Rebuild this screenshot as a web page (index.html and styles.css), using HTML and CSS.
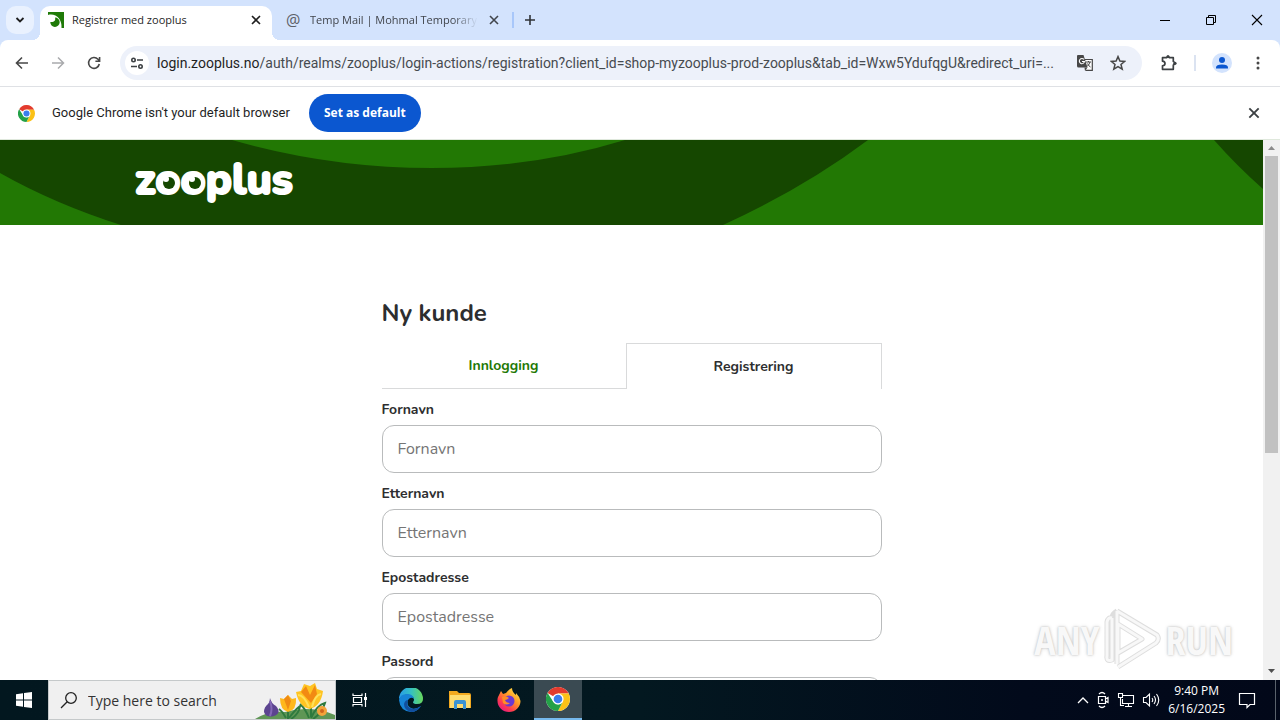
FILE: index.html
```html
<!DOCTYPE html>
<html lang="no">
<head>
<meta charset="utf-8">
<title>Registrer med zooplus</title>
<link rel="stylesheet" href="styles.css">
</head>
<body>
<svg class="defs" aria-hidden="true">
  <symbol id="x" viewBox="0 0 12 12"><path d="M2 2l8 8M10 2l-8 8" fill="none" stroke="currentColor" stroke-width="1.6"/></symbol>
  <symbol id="chrome" viewBox="0 0 24 24">
    <circle cx="12" cy="12" r="12" fill="#fff"/>
    <path d="M12 12L1.6 6A12 12 0 0 1 22.4 6L22.4 6.6H12z" fill="#e33b2e"/>
    <path d="M12 6.6H22.7A12 12 0 0 1 12 24L16.7 14.7z" fill="#fbc116"/>
    <path d="M1.6 6L7.3 14.7L12 17.4L16.2 15.7L12 24A12 12 0 0 1 1.6 6z" fill="#24a148"/>
    <circle cx="12" cy="12" r="5.6" fill="#fff"/><circle cx="12" cy="12" r="4.3" fill="#3b7ded"/>
  </symbol>
</svg>

<header class="tabstrip">
  <button class="tab-search" aria-label="Search tabs"><svg width="10" height="10" viewBox="0 0 10 10"><path d="M1.5 3L5 6.5L8.500 3" fill="none" stroke="#1f1f1f" stroke-width="1.800"/></svg></button>
  <div class="tab tab-active">
    <svg width="16" height="16" viewBox="0 0 16 16"><path d="M0 0H16V16H0z" fill="#1f7a08"/><path d="M0 3C8 1 14 7 13.500 16H0z" fill="#fff"/><path d="M7 5.500A4.700 4.700 0 1 1 2.300 10C6 10.500 8 8.500 7 5.500z" fill="#1f7a08"/></svg>
    <span class="tab-title">Registrer med zooplus</span>
    <button class="tab-close" aria-label="Close tab"><svg width="12" height="12"><use href="#x"/></svg></button>
  </div>
  <div class="tab tab-idle">
    <span class="at" aria-hidden="true">@</span>
    <span class="tab-title fade">Temp Mail | Mohmal Temporary</span>
    <button class="tab-close" aria-label="Close tab"><svg width="12" height="12"><use href="#x"/></svg></button>
  </div>
  <i class="tab-sep"></i>
  <button class="new-tab" aria-label="New tab"><svg width="12" height="12" viewBox="0 0 12 12"><path d="M6 1V11M1 6H11" stroke="#303337" stroke-width="1.600"/></svg></button>
  <div class="win-controls">
    <button aria-label="Minimize"><svg width="12" height="12" viewBox="0 0 12 12"><path d="M1 6.500H11" stroke="#000"/></svg></button>
    <button aria-label="Restore"><svg width="12" height="12" viewBox="0 0 12 12"><path d="M1.500 3.500H8.500V10.500H1.500zM3.500 3.500V1.500H10.500V8.500H8.500" fill="none" stroke="#000"/></svg></button>
    <button aria-label="Close"><svg width="12" height="12" viewBox="0 0 12 12"><path d="M1 1L11 11M11 1L1 11" stroke="#000" stroke-width="1.100"/></svg></button>
  </div>
</header>

<nav class="toolbar">
  <button class="nav-btn" aria-label="Back"><svg width="14" height="14" viewBox="0 0 14 14"><path d="M13 7H2M7 1.500L1.500 7L7 12.500" fill="none" stroke="#474747" stroke-width="1.600"/></svg></button>
  <button class="nav-btn" aria-label="Forward"><svg width="14" height="14" viewBox="0 0 14 14"><path d="M1 7H12M7 1.500L12.500 7L7 12.500" fill="none" stroke="#a9aaad" stroke-width="1.500"/></svg></button>
  <button class="nav-btn" aria-label="Reload"><svg width="14" height="14" viewBox="0 0 14 14"><path d="M12.300 8A5.400 5.400 0 1 1 11 3.300L12.500 5M12.600 1V5.200H8.400" fill="none" stroke="#474747" stroke-width="1.600"/></svg></button>
  <div class="omnibox">
    <button class="site-info" aria-label="View site information"><svg width="14" height="14" viewBox="0 0 14 14"><g fill="none" stroke="#3c4043" stroke-width="1.600"><circle cx="3.500" cy="4" r="1.700"/><path d="M7 4H13M1 10.500H7"/><circle cx="10.500" cy="10.500" r="1.700"/></g></svg></button>
    <div class="url"><span class="host">login.zooplus.no</span>/auth/realms/zooplus/login-actions/registration?client_id=shop-myzooplus-prod-zooplus&amp;tab_id=Wxw5YdufqgU&amp;redirect_uri=...</div>
    <button aria-label="Translate"><svg width="18" height="18" viewBox="0 0 18 18"><path d="M7 5.500H16.300V16.300H9.500" fill="#fff" stroke="#474747" stroke-width="1.200"/><path d="M1.500 1H7.500L11.500 13.500H2.500Q1 13.500 1 12V2z" fill="#474747"/><path d="M8.500 13.500H11.500L9 17z" fill="#474747"/><path d="M8 5.500A2.600 2.600 0 1 0 8.500 7.500H6" fill="none" stroke="#fff" stroke-width="1.100"/><path d="M10 8H15M12.500 7V8M14 8Q13 11 11 12.500M11.500 9.500Q12.500 12 14.500 13" fill="none" stroke="#474747"/></svg></button>
    <button aria-label="Bookmark"><svg width="16" height="16" viewBox="0 0 16 16"><path d="M8 1.600L9.900 6L14.700 6.400L11 9.500L12.200 14.200L8 11.700L3.800 14.200L5 9.500L1.300 6.400L6.100 6z" fill="none" stroke="#474747" stroke-width="1.500"/></svg></button>
  </div>
  <button class="ext" aria-label="Extensions"><svg width="18" height="18" viewBox="0 0 18 18"><path d="M2.500 3.700H6.500A1.800 1.800 0 0 1 9.500 3.700H13.300V7.500A1.800 1.800 0 0 1 13.300 11V15.300H2.500V11.800Q5 11.500 5 9.500Q5 7.500 2.500 7.200z" fill="none" stroke="#3c4043" stroke-width="1.700" stroke-linejoin="round"/><circle cx="8" cy="2.500" r="1.500" fill="#3c4043"/><circle cx="15" cy="9.300" r="1.600" fill="#3c4043"/></svg></button>
  <i class="tool-sep"></i>
  <button class="profile" aria-label="Profile"><svg width="20" height="20" viewBox="0 0 20 20"><circle cx="10" cy="10" r="10" fill="#d3e3fd"/><circle cx="10" cy="7" r="3" fill="#0b57d0"/><path d="M4 15.500V14.500Q4 11.500 10 11.500T16 14.500V15.500z" fill="#0b57d0"/></svg></button>
  <button class="menu" aria-label="Menu"><svg width="4" height="16" viewBox="0 0 4 16"><g fill="#474747"><circle cx="2" cy="3" r="1.500"/><circle cx="2" cy="8" r="1.500"/><circle cx="2" cy="13" r="1.500"/></g></svg></button>
</nav>

<section class="infobar">
  <svg width="17" height="17"><use href="#chrome"/></svg>
  <span class="info-text">Google Chrome isn't your default browser</span>
  <button class="set-default">Set as default</button>
  <button class="info-close" aria-label="Dismiss"><svg width="14" height="14"><use href="#x"/></svg></button>
</section>

<div class="viewport">
  <main class="page">
    <div class="banner">
      <svg class="banner-art" viewBox="0 0 1263 85" preserveAspectRatio="none"><path d="M0 0H1263V85H0z" fill="#154700"/><path d="M232 0Q330 28 432 28T625 0z" fill="#227804"/><path d="M0 33Q55 64 121 85H0z" fill="#227804"/><path d="M868 0Q804 48 723 85H1263V49Q1237 26 1214 0z" fill="#227804"/></svg>
      <a class="logo" href="#"><svg width="180" height="70" viewBox="0 0 180 70" role="img" aria-label="zooplus"><text x="1" y="46" class="logo-text">zooplus</text><g fill="#154700"><circle cx="35" cy="35" r="6"/><circle cx="61" cy="35" r="6"/></g><g fill="#fff"><circle cx="32" cy="31" r="3"/><circle cx="58" cy="31" r="3"/></g></svg></a>
    </div>
    <form class="form">
      <h1>Ny kunde</h1>
      <div class="form-tabs">
        <a class="form-tab login" href="#">Innlogging</a>
        <a class="form-tab register" href="#">Registrering</a>
      </div>
      <label for="first">Fornavn</label>
      <input id="first" type="text" placeholder="Fornavn">
      <label for="last">Etternavn</label>
      <input id="last" type="text" placeholder="Etternavn">
      <label for="mail">Epostadresse</label>
      <input id="mail" type="email" placeholder="Epostadresse">
      <label for="pass">Passord</label>
      <input id="pass" type="password">
    </form>
  </main>
  <div class="scrollbar">
    <svg width="17" height="16" viewBox="0 0 17 16"><path d="M5 10L8.500 6L12 10z" fill="#8b8b8b"/></svg>
    <i class="thumb"></i>
    <svg width="17" height="17" viewBox="0 0 17 17"><path d="M5 6L8.500 10L12 6z" fill="#505050"/></svg>
  </div>
  <div class="watermark" aria-hidden="true">
    <span>ANY</span>
    <svg width="58" height="64" viewBox="0 0 58 64"><g fill="none" stroke-linejoin="round"><path d="M14 3L54 27Q57 31 53 35L15 59M15 16V45L39 31L15 16M14 3V56M14 3Q9 6 9 10V52Q3 54 4 48V14Q5 9 9 10" stroke="#dedede" stroke-width="5"/><path d="M14 3L54 27Q57 31 53 35L15 59M15 16V45L39 31L15 16M14 3V56M9 10V52Q3 54 4 48V14Q5 9 9 10" stroke="#f8f8f8" stroke-width="3"/></g></svg>
    <span>RUN</span>
  </div>
</div>

<footer class="taskbar">
  <button class="start" aria-label="Start"><svg width="16" height="16" viewBox="0 0 16 16"><path d="M0 2.300L7 1.300V7.500H0zM8 1.100L16 0V7.500H8zM0 8.500H7V14.700L0 13.700zM8 8.500H16V16L8 14.900z" fill="#fff"/></svg></button>
  <div class="search">
    <svg width="18" height="18" viewBox="0 0 18 18"><circle cx="11" cy="7" r="5.300" fill="none" stroke="#222" stroke-width="1.300"/><path d="M7.200 10.800L1 17" stroke="#222" stroke-width="1.300"/></svg>
    <input type="text" placeholder="Type here to search" aria-label="Type here to search">
    <svg class="flowers" width="80" height="38" viewBox="0 0 80 38"><path d="M0 38Q14 29 30 31Q55 24 80 34V38z" fill="#5f9655"/><path d="M33 38V24M56 36V20M56 37Q62 24 70 22Q67 32 58 38M54 37Q50 27 45 23M34 37Q40 29 45 25Q44 33 36 38M31 37Q27 30 24 28" fill="none" stroke="#2f7a3e" stroke-width="2"/><path d="M15 17Q16 22 21 25Q27 32 19 35Q11 37 9 31Q9 26 13 23Q15 21 15 17z" fill="#5c4490"/><path d="M15 20Q18 28 15 35" fill="none" stroke="#8368b6" stroke-width="2"/><path d="M25 17L29 18L33 14L37 18L41 17Q42 29 33 31Q25 29 25 17z" fill="#ffb81c"/><path d="M29 18L33 14L36 20L33 29z" fill="#f08b13"/><path d="M41 11L46 10L49 3L55 5L60 2L62 8L68 10Q66 25 55 28Q44 26 41 11z" fill="#ffc422"/><path d="M46 11L51 5L55 14L60 4L62 13L56 22z" fill="#f28a13"/><path d="M43 14Q49 14 54 26M66 13Q60 14 57 26" fill="none" stroke="#ffe05a" stroke-width="2"/><circle cx="67" cy="30" r="5" fill="#f3a33a"/><circle cx="67" cy="30" r="2" fill="#cf651b"/></svg>
  </div>
  <div class="apps">
    <button class="app" aria-label="Task View"><svg width="18" height="18" viewBox="0 0 18 18"><path d="M2 2.500V4.500H11V2.500M2 15.500V13.500H11V15.500M2.500 6.500H10.500V11.500H2.500zM14.500 2V16" fill="none" stroke="#fff" stroke-width="1.200"/><path d="M13 6H16V9H13z" fill="#fff"/></svg></button>
    <button class="app" aria-label="Edge"><svg width="24" height="24" viewBox="0 0 24 24"><defs><linearGradient id="e1"><stop offset="0" stop-color="#279be8"/><stop offset=".5" stop-color="#35c1c2"/><stop offset="1" stop-color="#68d85c"/></linearGradient></defs><path d="M0 11A12 12 0 0 1 24 11Q24 16 18 16Q14 16 14 14Q16 12 14 9Q8 3 0 11z" fill="url(#e1)"/><path d="M0 12Q1 6 8 6Q14 6 15 11Q12 8 9 12Q7 17 12 20Q16 22 22 18Q18 24 12 24Q1 23 0 12z" fill="#1784d6"/><path d="M9 12Q6 18 12 20.500Q17 22 22 18Q18 24 12 24Q5 22 5 16Q6 12 9 12z" fill="#124e9d"/></svg></button>
    <button class="app" aria-label="File Explorer"><svg width="22" height="20" viewBox="0 0 22 20"><path d="M0 1H8L10 3H20Q22 3 22 5V18H0z" fill="#f3a91f"/><path d="M1 5H21V18H1z" fill="#ffdc70"/><path d="M5 19V12Q5 10 7 10H15Q17 10 17 12V19H14V14H8V19z" fill="#3c94d4"/></svg></button>
    <button class="app" aria-label="Firefox"><svg width="24" height="24" viewBox="0 0 24 24"><defs><linearGradient id="f1" x1="1" y1="0" x2="0.200" y2="1"><stop offset="0" stop-color="#fff44f"/><stop offset=".45" stop-color="#ff9a26"/><stop offset=".75" stop-color="#ff3d4c"/><stop offset="1" stop-color="#e31587"/></linearGradient></defs><path d="M1 9L4 3L6 6L9 5Q12 1 15 0Q15 4 19 7L19 5Q23 9 23.500 13A11.500 11 0 0 1 .5 13Q.3 11 1 9z" fill="url(#f1)"/><circle cx="12" cy="13" r="5.500" fill="#6b38d1"/><path d="M5 9Q9 7 12 10Q10 12 8 12Q9 15 13 15Q9 18 6 15z" fill="#ff8d25"/></svg></button>
    <button class="app app-on" aria-label="Chrome"><svg width="24" height="24"><use href="#chrome"/></svg></button>
  </div>
  <div class="tray">
    <svg width="12" height="8" viewBox="0 0 12 8"><path d="M1 7L6 2L11 7" fill="none" stroke="#fff" stroke-width="1.300"/></svg>
    <svg width="14" height="18" viewBox="0 0 14 18"><path d="M2.500 5.500H9.500V12.500H2.500zM9.500 8L12 6.500V11.500L9.500 10M3 3Q6 0 9 3M3 15Q6 18 9 15" fill="none" stroke="#fff" stroke-width="1.200"/><circle cx="6" cy="9" r="1" fill="#fff"/></svg>
    <svg width="18" height="16" viewBox="0 0 18 16"><path d="M6 3.500H16.500V11.500H5.500V7M8 14.500H15M11.500 11.500V14M1.500 1.500H5.500V5.500H1.500zM3.500 5.500V13.500H7" fill="none" stroke="#fff" stroke-width="1.100"/></svg>
    <svg width="18" height="16" viewBox="0 0 18 16"><path d="M1.500 5.500H4L7.500 2V14L4 10.500H1.500zM10 6Q11.500 8 10 10M12 4Q15 8 12 12M14.500 2Q19 8 14.500 14" fill="none" stroke="#fff" stroke-width="1.100"/></svg>
    <div class="clock"><span>9:40 PM</span><span>6/16/2025</span></div>
    <button class="notice" aria-label="Notifications"><svg width="18" height="18" viewBox="0 0 18 18"><path d="M1.500 2.500H16.500V13.500H12L9 16.500V13.500H1.500z" fill="none" stroke="#fff" stroke-width="1.200"/></svg></button>
    <i class="peek"></i>
  </div>
</footer>
</body>
</html>
```
FILE: styles.css
```css
* { box-sizing: border-box; }
html, body { height: 100%; margin: 0; }
body {
  display: flex;
  flex-direction: column;
  overflow: hidden;
  background: #d3e3fd;
  color: #1f1f1f;
  font: 12px/16px "Open Sans", "Noto Sans", sans-serif;
}
button {
  display: flex;
  align-items: center;
  justify-content: center;
  padding: 0;
  border: 0;
  background: none;
  color: inherit;
  font: inherit;
}
svg { display: block; flex: none; }
.defs { position: absolute; width: 0; height: 0; }

/* Tab strip */
.tabstrip {
  display: flex;
  flex: none;
  align-items: center;
  height: 40px;
  padding-left: 6px;
}
.tab-search { width: 28px; height: 28px; border-radius: 10px; background: #e9f1fe; }
.tab { display: flex; align-items: center; gap: 8px; }
.tab-active {
  position: relative;
  width: 232px;
  height: 34px;
  align-self: flex-end;
  margin-left: 6px;
  padding: 0 8px 6px;
  border-radius: 10px 10px 0 0;
  background: #fff;
}
.tab-active::before,
.tab-active::after { content: ""; position: absolute; bottom: 0; width: 8px; height: 8px; }
.tab-active::before { right: 100%; background: radial-gradient(circle at 0 0, transparent 8px, #fff 8px); }
.tab-active::after { left: 100%; background: radial-gradient(circle at 100% 0, transparent 8px, #fff 8px); }
.tab-idle { width: 230px; padding: 0 0 0 14px; color: #41454c; }
.tab-title { flex: 1; overflow: hidden; white-space: nowrap; font-size: 11px; }
.fade { -webkit-mask-image: linear-gradient(90deg, #000 85%, transparent); mask-image: linear-gradient(90deg, #000 85%, transparent); }
.tab-close { width: 16px; height: 16px; }
.at { width: 16px; font-size: 16px; color: #5c6068; }
.tab-sep { width: 2px; height: 16px; margin: 0 10px; background: #a8c7fa; }
.new-tab { width: 12px; height: 28px; }
.win-controls { display: flex; margin-left: auto; }
.win-controls button { width: 46px; height: 40px; }

/* Toolbar */
.toolbar {
  display: flex;
  flex: none;
  align-items: center;
  height: 47px;
  padding: 0 12px 0 4px;
  border-bottom: 1px solid #dfe1e5;
  border-radius: 8px 8px 0 0;
  background: #fff;
}
.nav-btn { width: 36px; height: 34px; }
.omnibox {
  display: flex;
  flex: 1;
  align-items: center;
  min-width: 0;
  height: 34px;
  margin-left: 8px;
  padding: 0 16px 0 5px;
  gap: 16px;
  border-radius: 17px;
  background: #edf1fa;
}
.site-info { flex: none; width: 24px; height: 24px; border-radius: 50%; background: #fff; }
.url { flex: 1; overflow: hidden; margin-left: -8px; white-space: nowrap; font: 14px/20px Roboto, sans-serif; color: #474b50; }
.host { color: #1f1f1f; }
.ext { width: 18px; height: 34px; margin-left: 18px; }
.tool-sep { width: 2px; height: 16px; margin: 0 16px; background: #dbe3f1; }
.profile { width: 20px; }
.menu { width: 20px; margin-left: 16px; }

/* Default-browser notice */
.infobar {
  display: flex;
  flex: none;
  align-items: center;
  height: 53px;
  padding: 0 19px 0 18px;
  border-bottom: 1px solid #dfe8dc;
  background: #fff;
}
.info-text { min-width: 240px; margin: 0 17px; font: 13px/20px Roboto, sans-serif; white-space: nowrap; }
.set-default {
  height: 38px;
  padding: 0 15px;
  border-radius: 19px;
  background: #0b57d0;
  color: #fff;
  font-size: 12px;
  font-weight: 700;
}
.info-close { margin-left: auto; color: #3c4043; }

/* Web page */
.viewport { position: relative; display: flex; flex: 1; min-height: 0; background: #fff; }
.page { flex: 1; min-width: 0; overflow: hidden; font-family: "Nunito", "Open Sans", sans-serif; color: #2d2e2f; }
.banner { position: relative; height: 85px; padding: 8px 134px; }
.banner-art { position: absolute; inset: 0; width: 100%; height: 100%; }
.logo { position: relative; display: inline-block; }
.logo-text { fill: #fff; stroke: #fff; stroke-width: 2px; stroke-linejoin: round; font: 800 43px "Nunito", "Lato", sans-serif; }
.form { display: flex; flex-direction: column; width: 500px; max-width: 100%; margin: 0 auto; padding-top: 72px; }
.form h1 { margin: 0 0 14px; font-size: 24px; font-weight: 700; line-height: 32px; }
.form-tabs { display: flex; height: 46px; margin-bottom: 11px; }
.form-tab {
  display: flex;
  align-items: center;
  justify-content: center;
  font-size: 14px;
  font-weight: 700;
  text-decoration: none;
}
.login { flex: 49; border-bottom: 1px solid #d9dadb; color: #227804; }
.register { flex: 51; border: 1px solid #d9dadb; border-bottom: 0; color: inherit; }
.form label { margin-bottom: 5px; font-size: 14px; font-weight: 700; line-height: 20px; }
.form input {
  flex: none;
  height: 48px;
  margin-bottom: 11px;
  padding: 0 15px;
  border: 1px solid #b9bbbc;
  border-radius: 12px;
  background: #fff;
  color: inherit;
  font: 16px "Nunito", "Open Sans", sans-serif;
}
.form input::placeholder { color: #757575; }

.scrollbar { display: flex; flex: none; flex-direction: column; width: 17px; background: #f1f1f1; }
.thumb { height: 55%; margin: 0 2px auto; background: #c1c1c1; }

.watermark {
  position: absolute;
  right: 47px;
  bottom: 8px;
  display: flex;
  align-items: center;
  gap: 4px;
  color: #f8f8f8;
  font: 400 40px/64px "Open Sans Condensed", "Liberation Sans Narrow", "DejaVu Sans Condensed", sans-serif;
  text-shadow: 0 0 2px #bbb, 0 0 4px #ddd;
}

/* Taskbar */
.taskbar { display: flex; flex: none; height: 40px; background: linear-gradient(90deg, #02171f, #031820 50%, #020a1b 80%, #020819); color: #fff; }
.start { width: 48px; }
.search {
  display: flex;
  align-items: center;
  width: 288px;
  padding-left: 11px;
  border: 1px solid #c5c9ca;
  background: #f0f0f0;
}
.search input { flex: 1; min-width: 0; margin-left: 10px; padding: 0; border: 0; background: none; color: #222; font: 14px "Open Sans", sans-serif; }
.search input::placeholder { color: #333; }
.apps { display: flex; gap: 1px; }
.app { width: 48px; }
.app:nth-child(2) { margin-left: 2px; }
.app-on { border-bottom: 2px solid #76b9ed; background: #3a4a52; }
.tray { display: flex; align-items: center; gap: 7px; margin-left: auto; }
.clock { display: flex; flex-direction: column; align-items: center; margin-left: 1px; font-size: 12px; line-height: 18px; }
.notice { width: 30px; margin-right: 6px; }
.peek { align-self: stretch; width: 5px; border-left: 1px solid #5a626c; }
```
